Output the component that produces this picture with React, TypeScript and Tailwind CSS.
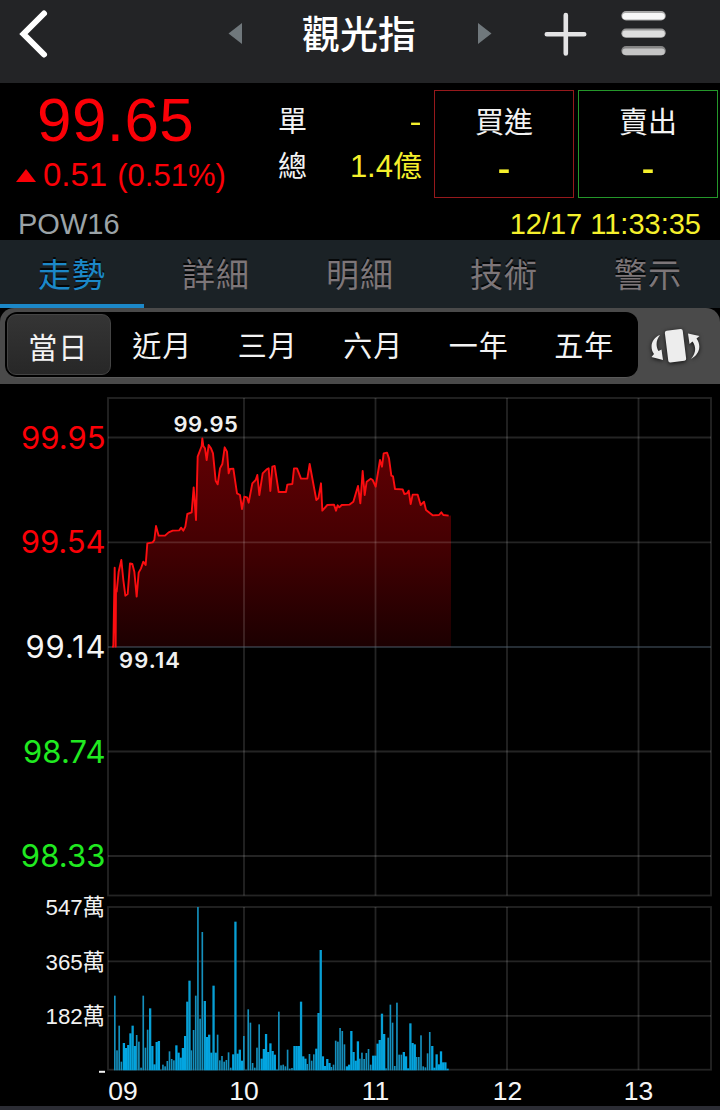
import React from "react";

const TABS = ["走勢", "詳細", "明細", "技術", "警示"];
const PERIODS = ["當日", "近月", "三月", "六月", "一年", "五年"];

// Chart data is kept in thirds of a pixel.
const UNIT = 3;
const PRICE: number[][] = [
  [36, 770], [40, 770], [44, 533], [47, 770], [48, 600], [50, 605], [56, 545], [64, 510], [70, 570], [76, 617], [83, 612],
  [90, 520], [97, 522], [103, 545], [110, 620], [116, 548], [123, 535], [130, 515], [137, 525], [142, 460],
  [158, 457], [163, 450], [168, 408], [176, 437], [195, 437], [206, 427], [218, 422], [238, 421], [243, 413],
  [250, 422], [256, 410], [262, 372], [275, 367], [281, 292], [288, 390], [293, 200], [305, 168], [307, 145],
  [310, 168], [315, 175], [320, 210], [326, 165], [333, 175], [339, 190], [347, 272], [353, 283], [360, 235],
  [367, 222], [374, 172], [381, 185], [386, 250], [390, 237], [400, 236], [411, 310], [420, 315], [426, 357],
  [433, 320], [441, 322], [446, 338], [457, 280], [467, 270], [472, 255], [478, 315], [488, 250], [500, 238],
  [506, 235], [511, 303], [517, 230], [524, 228], [536, 306], [558, 306], [562, 284], [577, 282], [582, 235],
  [591, 235], [603, 266], [622, 266], [629, 222], [649, 330], [655, 325], [663, 280], [667, 362], [682, 345],
  [702, 344], [708, 362], [713, 346], [718, 352], [725, 345], [748, 344], [760, 335], [774, 288], [781, 340],
  [788, 243], [794, 315], [800, 275], [812, 266], [818, 270], [827, 290], [840, 210], [846, 230], [851, 190],
  [861, 188], [867, 205], [874, 257], [879, 259], [885, 297], [908, 298], [913, 312], [921, 310], [926, 302],
  [932, 342], [938, 314], [953, 314], [962, 345], [972, 335], [978, 360], [998, 376], [1017, 375], [1024, 367],
  [1030, 375], [1046, 377],
];

const VOLUME_TOPS = [
  302, 466, 392, 500, 444, 459, 450, 415, 392, 453, 420, 440, 518, 302, 458, 404, 340, 453, 508, 441, 438, 524, 509,
  514, 498, 469, 492, 496, 451, 473, 488, 459, 423, 320, 257, 466, 405, 302, 36, 371, 111, 318, 426, 419, 473, 272,
  473, 419, 496, 483, 500, 495, 472, 518, 478, 80, 476, 464, 497, 423, 524, 343, 383, 504, 518, 458, 388, 491, 462,
  417, 471, 445, 468, 479, 524, 350, 511, 509, 514, 464, 521, 519, 453, 453, 453, 320, 484, 491, 507, 477, 497, 478,
  461, 354, 165, 484, 513, 492, 504, 516, 509, 437, 440, 399, 408, 448, 514, 509, 408, 471, 497, 439, 491, 473, 492,
  474, 462, 509, 482, 482, 446, 435, 356, 417, 520, 428, 329, 383, 513, 323, 479, 479, 471, 484, 520, 385, 444, 448,
  486, 486, 421, 514, 517, 475, 411, 453, 518, 478, 508, 469, 502, 502, 521,
];

// Index ranges in which neighbouring bars are drawn with a gap.
const THIN: number[][] = [
  [0, 3], [10, 15], [21, 27], [35, 40], [47, 53], [59, 66], [75, 81], [88, 91], [99, 105], [112, 117], [124, 131],
  [138, 144],
];

const HOURS: [number, string, number][] = [
  [108, "09", 123], [244, "10", 244], [375.5, "11", 375.5], [507, "12", 507.5], [638.5, "13", 638.5],
];

const LEVELS: [number, string, string, number][] = [
  [437.5, "99.95", "#fb0007", 21], [542.3, "99.54", "#fb0007", 20.8], [647, "99.14", "#f5f5f5", 25.5],
  [751.5, "98.74", "#20ea20", 23], [856, "98.33", "#20ea20", 20.8],
];

const VOLUMES: [number, string][] = [[907, "547萬"], [961.3, "365萬"], [1015.8, "182萬"]];

const line = PRICE.map(([x, y]) => `${(100 + x / UNIT).toFixed(2)},${(390 + y / UNIT).toFixed(2)}`).join(" ");

function Chart() {
  return (
    <svg width="720" height="722" viewBox="0 384 720 722" className="block">
      <defs>
        <linearGradient id="area" x1="0" y1="437" x2="0" y2="647" gradientUnits="userSpaceOnUse">
          <stop offset="0" stopColor="#630003" />
          <stop offset="0.5" stopColor="#450002" />
          <stop offset="1" stopColor="#1c0001" />
        </linearGradient>
      </defs>
      <polygon points={`112,647 ${line} 451,515.6 451,647`} fill="url(#area)" />
      <g stroke="#ffffff" strokeOpacity="0.14" strokeWidth="1.8" fill="none">
        <rect x="108" y="398" width="603" height="497.5" />
        <rect x="108" y="907" width="603" height="162.7" />
        {LEVELS.map(([y]) => <path key={y} d={`M108 ${y}H711`} />)}
        {HOURS.slice(1).map(([x]) => <path key={x} d={`M${x} 398V895.5M${x} 907V1069.7`} />)}
        {VOLUMES.slice(1).map(([y]) => <path key={y} d={`M108 ${y}H711`} />)}
      </g>
      <path d="M108 647H711" stroke="#284055" strokeWidth="1" opacity="0.7" />
      <polyline points={line} fill="none" stroke="#fb0d10" strokeWidth="1.9" strokeLinejoin="round" />
      {VOLUME_TOPS.map((top, i) => {
        const thin = THIN.some(([a, b]) => i >= a && i <= b);
        const tall = top < 400;
        return (
          <rect
            key={i}
            x={114 + i * 2.187}
            y={895 + top / UNIT}
            width={thin ? 1.65 : 2.3}
            height={(526 - top) / UNIT}
            fill={thin ? "#1590bd" : tall ? "#089fd4" : "#03a5e0"}
          />
        );
      })}
      <g fontFamily="Inter, sans-serif" fontSize="31">
        {LEVELS.map(([y, label, color, x]) => (
          <text key={label} x={x} y={y + 11} fill={color} textLength={105.5 - x} lengthAdjust="spacing">{label}</text>
        ))}
      </g>
      <g fontFamily="Inter, sans-serif" fontSize="22" fontWeight="600" fill="#f0f0f0">
        <text x="173.5" y="432.3" letterSpacing="0.55">99.95</text>
        <text x="119" y="668" letterSpacing="1.1">99.14</text>
      </g>
      <g fontFamily="'Liberation Sans', 'Noto Sans CJK TC', sans-serif" fontSize="22.3" textAnchor="end" fill="#f2f2f2">
        {VOLUMES.map(([y, label]) => <text key={label} x="105" y={y + 8.3}>{label}</text>)}
        <path d="M99 1071.800H105" stroke="#f2f2f2" strokeWidth="2" />
      </g>
      <g fontFamily="'Liberation Sans', sans-serif" fontSize="26.5" textAnchor="middle" fill="#f5f5f5">
        {HOURS.map(([, label, x]) => <text key={label} x={x} y="1099.5">{label}</text>)}
      </g>
    </svg>
  );
}

function Header() {
  return (
    <header className="flex h-[83px] items-start bg-[#232426]">
      <svg className="mt-2 ml-4 shrink-0" width="36" height="52" viewBox="0 0 36 52" fill="none">
        <path d="M28 5.500L7.500 26L28 46.500" stroke="#fff" strokeWidth="6" strokeLinecap="round" strokeLinejoin="miter" />
      </svg>
      <svg className="mt-[22px] ml-[176px] shrink-0" width="15" height="24" viewBox="0 0 15 24">
        <path d="M14 1V22L0.500 11.500Z" fill="#70787c" />
      </svg>
      <h1 className="mt-4 ml-[59px] w-[114px] shrink-0 text-[38px] leading-[38px] font-medium whitespace-nowrap text-white">
        觀光指
      </h1>
      <svg className="mt-[22px] ml-[61px] shrink-0" width="15" height="24" viewBox="0 0 15 24">
        <path d="M1 1V22L14.500 11.500Z" fill="#70787c" />
      </svg>
      <svg className="mt-2 ml-[51px] shrink-0" width="46" height="52" viewBox="0 0 46 52">
        <path d="M3.800 26.200H41.200M22.800 7V45.500" stroke="#e3e3e4" strokeWidth="4.600" strokeLinecap="round" />
      </svg>
      <svg className="mt-2 ml-[29px] shrink-0" width="50" height="52" viewBox="0 0 50 52">
        <rect x="3.300" y="3" width="44.500" height="9.500" rx="4.750" fill="#a8a8a8" />
        <rect x="4.300" y="5" width="42.500" height="6.500" rx="3.250" fill="#f7f7f7" />
        <rect x="3.300" y="20.500" width="44.500" height="9.500" rx="4.750" fill="#999" />
        <rect x="4.300" y="22.500" width="42.500" height="6.500" rx="3.250" fill="#dedede" />
        <rect x="3.300" y="38" width="44.500" height="9.500" rx="4.750" fill="#858585" />
        <rect x="4.300" y="40.500" width="42.500" height="6.500" rx="3.250" fill="#c4c4c4" />
      </svg>
    </header>
  );
}

function Quote() {
  return (
    <section className="h-[157px] bg-black">
      <div className="flex h-[122px]">
        <div className="w-[278px] shrink-0 text-[#fb0007]">
          <div className="mt-[5px] ml-[37px] text-[62px] leading-[64px] tracking-[0.4px]">99.65</div>
          <div className="mt-[5px] ml-4 flex items-baseline whitespace-nowrap">
            <svg width="20" height="14" viewBox="0 0 20 14" className="mr-[7px] self-center">
              <path d="M10 0L20 13H0Z" fill="#fb0007" />
            </svg>
            <span className="text-[33px] leading-9">0.51</span>
            <span className="ml-[10px] text-[31px] leading-9">(0.51%)</span>
          </div>
        </div>
        <div className="w-[144px] shrink-0 pt-[23px] text-[29px] leading-[32px]">
          <div className="flex justify-between">
            <span className="text-[#f3f3f3]">單</span>
            <span className="inline-block origin-right scale-x-125 text-[#f5f02c]">-</span>
          </div>
          <div className="mt-[13px] flex justify-between">
            <span className="text-[#f3f3f3]">總</span>
            <span className="text-[#f5f02c]"><span className="text-[31px] leading-[32px]">1.4</span>億</span>
          </div>
        </div>
        <div className="mt-[7px] ml-3 flex gap-1">
          <QuoteBox label="買進" border="border-[#96191c]" />
          <QuoteBox label="賣出" border="border-[#24972a]" />
        </div>
      </div>
      <div className="flex items-baseline justify-between pt-[2px] pr-[19px] pl-[18px] text-[29px] leading-[34px]">
        <span className="text-[#9ba3a7]">POW16</span>
        <span className="text-[#f5f02c]">12/17 11:33:35</span>
      </div>
    </section>
  );
}

function QuoteBox({ label, border }: { label: string; border: string }) {
  return (
    <div className={`flex h-[108px] w-[140px] flex-col items-center border-[1.5px] ${border}`}>
      <div className="mt-[16px] text-[29px] leading-[32px] text-[#f3f3f3]">{label}</div>
      <div className="mt-[14px] scale-x-125 text-[30px] leading-[32px] font-bold text-[#f5f02c]">-</div>
    </div>
  );
}

export default function App() {
  return (
    <main className="h-[1110px] w-[720px] overflow-hidden bg-black font-['Liberation_Sans','Noto_Sans_CJK_TC',sans-serif]">
      <Header />
      <Quote />
      <nav className="grid h-[68px] grid-cols-5 bg-[#1b2226]">
        {TABS.map((tab, i) => (
          <div
            key={tab}
            className={
              i === 0
                ? "border-b-4 border-[#1c88c8] pt-[18px] text-center text-[33px] leading-[36px] tracking-[1px] text-[#1c88c8] [text-shadow:0_-2px_0_#050708]"
                : "pt-[18px] text-center text-[33px] leading-[36px] tracking-[1px] text-[#7d7679] [text-shadow:0_-2px_0_#050708]"
            }
          >
            {tab}
          </div>
        ))}
      </nav>
      <div className="flex h-[76px] rounded-t-[14px] bg-[#4a4a4a] pt-1 pl-[5px]">
        <div className="grid h-[66px] w-[633px] grid-cols-6 rounded-[12px] border-b border-[#5a5a5a] bg-black text-center text-[29px] leading-[36px] tracking-[1px] text-[#f3f3f3]">
          {PERIODS.map((p, i) =>
            i === 0 ? (
              <div key={p} className="mt-[2px] ml-[2px] h-[61px] rounded-[9px] border border-[#444] bg-linear-to-b from-[#353535] to-[#272727] pt-[16px] pr-px">{p}</div>
            ) : (
              <div key={p} className="pt-[17px] pr-[2px]">{p}</div>
            )
          )}
        </div>
        <svg width="60" height="50" viewBox="645 320 60 50" className="mt-2 ml-[7px]">
          <g fill="#ededed" className="drop-shadow-[0_1px_2px_rgba(0,0,0,0.8)]">
            <rect x="-9" y="-16" width="18" height="32" rx="2" transform="translate(675.500 345.800) rotate(-7)" />
            <path d="M660 335C652 338 649 347 654 354L651.500 357L663 360L661.500 349.500L658.500 351C655.500 346 656 340 660 335Z" />
            <path d="M691 359C699 355 702 346 696.500 338.500L699.500 336L688 333.500L689.500 344L692.500 341.500C696.500 347 696 353 691 359Z" />
          </g>
        </svg>
      </div>
      <Chart />
      <div className="h-1 bg-[#2b2c34]" />
    </main>
  );
}
